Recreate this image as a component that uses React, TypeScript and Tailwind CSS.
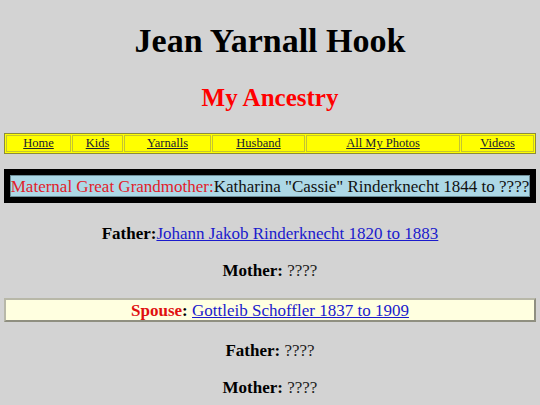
import React from "react";

const serif = { fontFamily: '"Liberation Serif", "Times New Roman", serif' };

const navItems = [
  { label: "Home", w: "w-[65px]" },
  { label: "Kids", w: "w-[51px]" },
  { label: "Yarnalls", w: "w-[87px]" },
  { label: "Husband", w: "w-[93px]" },
  { label: "All My Photos", w: "w-[154px]" },
  { label: "Videos", w: "" },
];

export default function App() {
  return (
    <div className="min-h-[405px] w-[540px] bg-[#d3d3d3] text-black" style={serif}>
      <div className="flex flex-col items-center pt-[21px]">
        <h1 className="text-[34px] font-bold leading-[39px]">Jean Yarnall Hook</h1>
        <h2 className="mt-[24px] text-[25px] font-bold leading-[28px] text-[#ff0000]">My Ancestry</h2>
      </div>

      <div className="mx-[4px] mt-[21px] flex h-[21px] border border-[#8c8c3a] bg-[#ffff00] p-px gap-px">
        {navItems.map((n) => (
          <div
            key={n.label}
            className={`${n.w} ${n.w ? "" : "flex-1"} flex items-center justify-center border border-[#c4c431] text-[12.5px] leading-none`}
          >
            <a href="#" className="text-[#202030] underline whitespace-nowrap">{n.label}</a>
          </div>
        ))}
      </div>

      <div className="mx-[4px] mt-[15px] bg-black p-[6px]">
        <div className="flex h-[22px] items-center justify-center border border-[#6f8f99] bg-[#add8e6] text-[17px] leading-none whitespace-nowrap">
          <span className="text-[#e2202a]">Maternal Great Grandmother:</span>
          <span className="text-[#111]">Katharina "Cassie" Rinderknecht 1844 to ????</span>
        </div>
      </div>

      <p className="mt-[21px] text-center text-[17px] leading-[20px]">
        <b>Father:</b>
        <a href="#" className="text-[#1a1acc] underline">Johann Jakob Rinderknecht 1820 to 1883</a>
      </p>
      <p className="mt-[17px] text-center text-[17px] leading-[20px]">
        <b>Mother:</b> <span className="text-[#222]">????</span>
      </p>

      <div className="mx-[4px] mt-[17px] flex h-[24px] items-center justify-center border-2 border-t-[#b8b8a8] border-l-[#b8b8a8] border-b-[#8f8f80] border-r-[#8f8f80] bg-[#ffffe0] text-[17px] leading-none">
        <b className="text-[#e01010]">Spouse</b>
        <b>:</b>&nbsp;
        <a href="#" className="text-[#1a1acc] underline">Gottleib Schoffler 1837 to 1909</a>
      </div>

      <p className="mt-[19px] text-center text-[17px] leading-[20px]">
        <b>Father:</b> <span className="text-[#222]">????</span>
      </p>
      <p className="mt-[17px] text-center text-[17px] leading-[20px]">
        <b>Mother:</b> <span className="text-[#222]">????</span>
      </p>
    </div>
  );
}
